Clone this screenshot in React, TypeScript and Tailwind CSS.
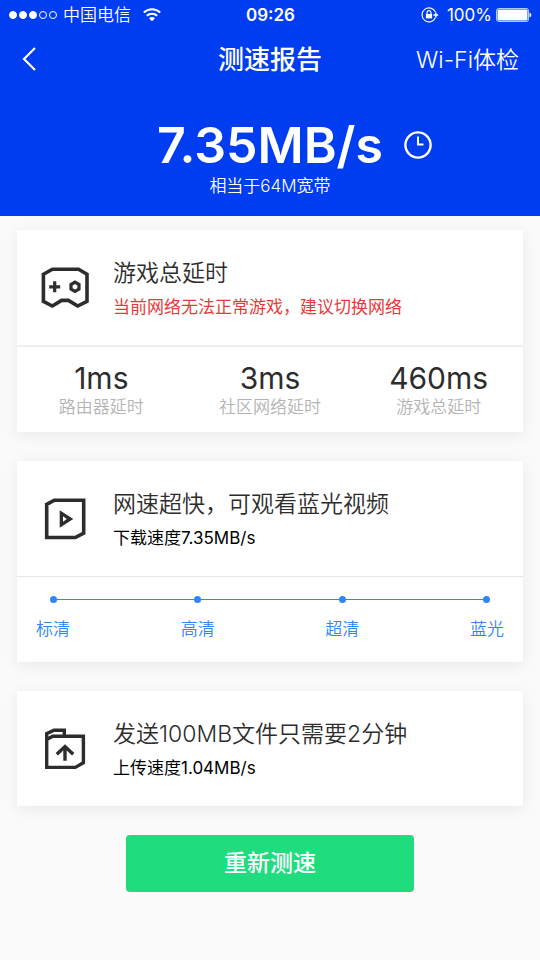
import React from 'react'

const qualities = ["标清", "高清", "超清", "蓝光"];

const delays = [
  { value: "1ms", label: "路由器延时" },
  { value: "3ms", label: "社区网络延时" },
  { value: "460ms", label: "游戏总延时" }
];

function GameIcon() {
  return (
    <svg width="48" height="42" viewBox="0 0 48 42" fill="none" stroke="#2d2d2d" aria-hidden="true">
      <path strokeWidth="3.6" d="M2.4 7.2L11.4 2.2H37.6L46 7.2V34.4L36.7 39L27.4 33.4H20.6L11.3 39L2.4 34.4Z" />
      <path strokeWidth="3.2" d="M8.2 19.8H19.2M13.7 14.3V25.3" />
      <path strokeWidth="3.2" d="M34 15.2L38 17.5V22.1L34 24.4L30 22.1V17.5Z" />
    </svg>
  );
}

function VideoIcon() {
  return (
    <svg width="42" height="42" viewBox="0 0 42 42" fill="none" aria-hidden="true">
      <path stroke="#2d2d2d" strokeWidth="3.6" d="M2.7 6.4L10.3 2.2H39.7V35.2L31.3 39.5H2.7Z" />
      <path fill="#2d2d2d" fillRule="evenodd" d="M15.7 12.2L29.3 20.9L15.7 29.7ZM19 18.2V23.8L22.8 20.9Z" />
    </svg>
  );
}

function UploadIcon() {
  return (
    <svg width="42" height="42" viewBox="0 0 42 42" fill="none" stroke="#2d2d2d" strokeWidth="3.4" aria-hidden="true">
      <path d="M2.7 11.6L8.7 8.3H39.4V34.8L31.3 39.4H2.7V5.6L10 2.2H20.3V8.3" />
      <path d="M21 19V32.7M12.8 26.3L21 18.6L29.2 26.3" />
    </svg>
  );
}

function StatusBar() {
  return (
    <div className="grid h-[30px] grid-cols-[1fr_auto_1fr] items-center pl-[9px] pr-2 text-[17px] leading-6">
      <div className="flex items-center">
        <div className="flex gap-0.5">
          {[1, 2, 3, 4, 5].map((n) => (
            <span
              key={n}
              className={`h-2 w-2 rounded-full border border-white ${n <= 3 ? "bg-white" : ""}`}
            />
          ))}
        </div>
        <span className="ml-1.5 font-[350]">中国电信</span>
        <svg className="ml-3" width="18" height="14" viewBox="0 0 18 14" fill="none" stroke="white" strokeWidth="2" aria-hidden="true">
          <path d="M0.8 4.6C5.5 0.2 12.5 0.2 17.2 4.6" />
          <path d="M3.8 7.8C6.8 5 11.2 5 14.2 7.8" />
          <path fill="white" stroke="none" d="M6 10.2C7.8 8.6 10.2 8.6 12 10.2L9 13.3Z" />
        </svg>
      </div>
      <span className="font-semibold">09:26</span>
      <div className="flex items-center justify-end">
        <svg width="18" height="16" viewBox="0 0 18 16" fill="none" stroke="white" aria-hidden="true">
          <path strokeWidth="1.1" d="M14.4 5A7 7 0 1 0 14.4 10.8" />
          <path strokeWidth="1.6" d="M14.8 5.4V10.4M12.4 8H17.2" />
          <path fill="white" stroke="none" d="M4.9 7H11.1V11.4H4.9Z" />
          <path strokeWidth="1.2" d="M6.1 7V5.6A1.9 1.9 0 0 1 9.9 5.6V7" />
        </svg>
        <span className="ml-2 mr-1">100%</span>
        <svg width="36" height="14" viewBox="0 0 36 14" fill="none" aria-hidden="true">
          <rect x="0.5" y="0.5" width="32" height="13" rx="2" stroke="white" strokeOpacity="0.7" />
          <rect x="1.5" y="1.5" width="30" height="11" rx="1" fill="white" />
          <path fill="white" d="M33.5 4.5C35.8 5.4 35.8 8.6 33.5 9.5Z" />
        </svg>
      </div>
    </div>
  );
}

type CardHeadProps = {
  icon: React.ReactNode;
  title: string;
  note: string;
  noteClass: string;
};

function CardHead({ icon, title, note, noteClass }: CardHeadProps) {
  return (
    <div className="flex items-center pb-[26px] pt-[27px]">
      <div className="flex w-24 shrink-0 justify-center">{icon}</div>
      <div>
        <h2 className="text-[23px] font-[350] leading-8 text-[#2d2d2d]">{title}</h2>
        <p className={`mt-1.5 text-[17px] leading-6 ${noteClass}`}>{note}</p>
      </div>
    </div>
  );
}

function Card({ children }: { children: React.ReactNode }) {
  return (
    <section className="bg-white shadow-[0_3px_14px_rgba(0,0,0,0.07)]">{children}</section>
  );
}

function App() {
  return (
    <div
      lang="zh-CN"
      className="min-h-screen w-full bg-[#fafafa] font-['Inter','Noto_Sans_CJK_SC',sans-serif]"
    >
      <header className="bg-[#003cf0] pb-[18px] text-white">
        <StatusBar />

        <nav className="grid h-[60px] grid-cols-[1fr_auto_1fr] items-center px-[21px]">
          <button type="button" aria-label="返回" className="justify-self-start">
            <svg width="16" height="26" viewBox="0 0 16 26" fill="none" stroke="white" strokeWidth="2.2" aria-hidden="true">
              <path d="M14 1L3 12L14 23" />
            </svg>
          </button>
          <h1 className="text-[26px] font-medium leading-[34px]">测速报告</h1>
          <a href="#wifi" className="justify-self-end text-[23px] font-[350] leading-[34px]">Wi-Fi体检</a>
        </nav>

        {/* Result */}
        <div className="mt-[27px] grid grid-cols-[1fr_auto_1fr] items-center">
          <p className="col-start-2 text-[50px] font-semibold leading-[56px]">7.35MB/s</p>
          <button type="button" aria-label="历史记录" className="ml-5 justify-self-start">
            <svg width="30" height="30" viewBox="0 0 30 30" fill="none" stroke="white" strokeWidth="2.4" aria-hidden="true">
              <circle cx="15" cy="15" r="12.6" />
              <path strokeWidth="2" d="M15 6.5V14.6H20.5" />
            </svg>
          </button>
        </div>
        <p className="mt-px text-center text-[17px] font-[350] leading-6">相当于64M宽带</p>
      </header>

      <main className="flex flex-col gap-[29px] px-[17px] pb-8 pt-3.5">
        <Card>
          <CardHead
            icon={<GameIcon />}
            title="游戏总延时"
            note="当前网络无法正常游戏，建议切换网络"
            noteClass="text-[#e63a3a]"
          />
          <dl className="grid grid-cols-3 border-t-2 border-[#efefef] pb-3 pt-3.5 text-center">
            {delays.map((item) => (
              <div key={item.label} className="flex flex-col-reverse">
                <dt className="text-[17px] font-[350] leading-[25px] text-[#b4b4b4]">{item.label}</dt>
                <dd className="text-[30px] leading-[34px] text-[#2d2d2d]">{item.value}</dd>
              </div>
            ))}
          </dl>
        </Card>

        <Card>
          <CardHead
            icon={<VideoIcon />}
            title="网速超快，可观看蓝光视频"
            note="下载速度7.35MB/s"
            noteClass="text-black"
          />
          <div className="border-t border-[#e6e6e6] px-[19px] pb-[21px] pt-[19px]">
            <div className="flex items-center px-3.5">
              {qualities.map((name, index) => (
                <React.Fragment key={name}>
                  {index > 0 && <span className="h-px flex-1 bg-[#2f86fa]" />}
                  <span className="h-[7px] w-[7px] rounded-full bg-[#2f86fa]" />
                </React.Fragment>
              ))}
            </div>
            <ul className="mt-3.5 flex justify-between text-[17px] font-[350] leading-6 text-[#2f86fa]">
              {qualities.map((name) => (
                <li key={name}>{name}</li>
              ))}
            </ul>
          </div>
        </Card>

        <Card>
          <CardHead
            icon={<UploadIcon />}
            title="发送100MB文件只需要2分钟"
            note="上传速度1.04MB/s"
            noteClass="text-black"
          />
        </Card>

        <button
          type="button"
          className="w-72 self-center rounded-sm bg-[#1fdc7f] py-3 text-[23px] font-medium leading-[33px] text-white"
        >
          重新测速
        </button>
      </main>
    </div>
  );
}

export default App;
